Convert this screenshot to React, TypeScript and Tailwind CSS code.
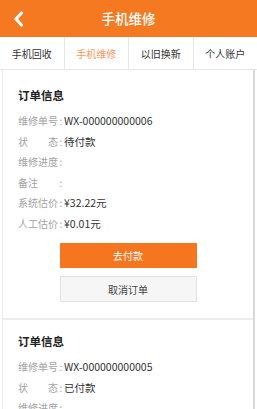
import React from "react";

const font = { fontFamily: '"Noto Sans CJK SC", "Noto Sans", sans-serif' };

const tabs = ["手机回收", "手机维修", "以旧换新", "个人账户"];

interface Order {
  no: string;
  status: string;
  sys?: string;
  manual?: string;
  pending?: boolean;
}

const orders: Order[] = [
  { no: "WX-000000000006", status: "待付款", sys: "¥32.22元", manual: "¥0.01元", pending: true },
  { no: "WX-000000000005", status: "已付款" },
];

const Row = ({ label, value, spaced }: { label: string; value?: string; spaced?: boolean }) => (
  <div className="flex items-center h-[20.5px] text-[10px] leading-none">
    <span className={`text-[#a3a3a3] w-[40px] flex ${spaced ? "justify-between" : ""}`}>
      {spaced ? (
        <>
          <span>{label[0]}</span>
          <span>{label[1]}</span>
        </>
      ) : (
        label
      )}
    </span>
    <span className="text-[#a3a3a3] w-[6px] text-center">:</span>
    {value && <span className="text-[#333] text-[10.5px]">{value}</span>}
  </div>
);

const OrderCard = ({ order, first }: { order: Order; first?: boolean }) => (
  <div className={`bg-white px-[15px] ${first ? "pt-[16px] pb-[16px]" : "pt-[12px] pb-4"}`}>
    <h3 className="text-[11.5px] font-bold text-[#222] h-[20px] flex items-center mb-[5px]">订单信息</h3>
    <Row label="维修单号" value={order.no} />
    <Row label="状态" value={order.status} spaced />
    <Row label="维修进度" />
    <Row label="备注" />
    {order.pending && (
      <>
        <Row label="系统估价" value={order.sys} />
        <Row label="人工估价" value={order.manual} />
        <div className="flex flex-col items-center mt-[9px] gap-[8px]">
          <button className="w-[137px] h-[25px] bg-[#f5761f] text-white text-[10px]">去付款</button>
          <button className="w-[137px] h-[26px] bg-[#f6f6f6] border border-[#e2e2e2] text-[#444] text-[10px]">
            取消订单
          </button>
        </div>
      </>
    )}
  </div>
);

export default function App() {
  return (
    <div className="w-[257px] h-[409px] overflow-hidden bg-white" style={font}>
      <header className="relative h-[37px] bg-[#f47920] flex items-center justify-center">
        <svg className="absolute left-[13px] top-[11px]" width="11" height="16" viewBox="0 0 11 16">
          <path d="M8.5 2 L3 8 L8.5 14" fill="none" stroke="white" strokeWidth="3.2" strokeLinecap="round" strokeLinejoin="round" />
        </svg>
        <h1 className="text-white text-[13.5px] font-medium">手机维修</h1>
      </header>
      <nav className="flex h-[33px] border-b border-[#e6e6e6] bg-white">
        {tabs.map((t, i) => (
          <div
            key={t}
            className={`flex-1 flex items-center justify-center text-[10px] ${
              i < 3 ? "border-r border-[#e6e6e6]" : ""
            } ${i === 1 ? "text-[#f49a5c]" : "text-[#333]"}`}
          >
            {t}
          </div>
        ))}
      </nav>
      <div className="border-l border-r-2 border-l-[#ececec] border-r-[#d9d9d9] mx-[2px] bg-[#ededed] flex flex-col gap-[2px]">
        {orders.map((o, i) => (
          <OrderCard key={o.no} order={o} first={i === 0} />
        ))}
      </div>
    </div>
  );
}
